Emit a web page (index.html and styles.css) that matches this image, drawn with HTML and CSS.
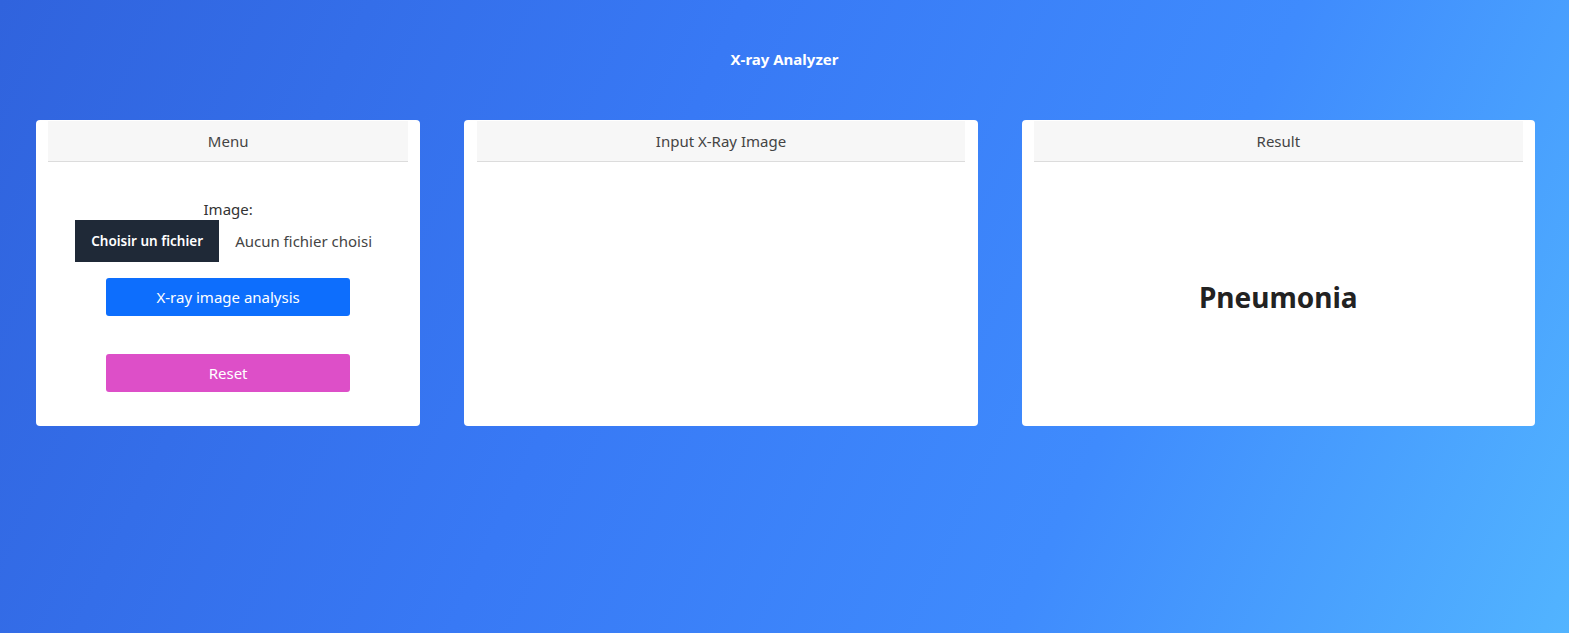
FILE: index.html
```html
<!DOCTYPE html>
<html lang="fr">
<head>
<meta charset="utf-8">
<title>X-ray Analyzer</title>
<link rel="stylesheet" href="styles.css">
</head>
<body>
  <header class="topbar">
    <h1 class="title">X-ray Analyzer</h1>
  </header>
  <main class="cards">
    <section class="card card-menu">
      <div class="card-header">Menu</div>
      <div class="card-body menu-body">
        <label class="field-label">Image:</label>
        <div class="file-input">
          <span class="file-btn">Choisir un fichier</span>
          <span class="file-name">Aucun fichier choisi</span>
        </div>
        <button class="btn btn-primary">X-ray image analysis</button>
        <button class="btn btn-reset">Reset</button>
      </div>
    </section>
    <section class="card card-input">
      <div class="card-header">Input X-Ray Image</div>
      <div class="card-body"></div>
    </section>
    <section class="card card-result">
      <div class="card-header">Result</div>
      <div class="card-body result-body">
        <div class="result-text">Pneumonia</div>
      </div>
    </section>
  </main>
</body>
</html>
```

FILE: styles.css
```css
html, body {
  margin: 0;
  height: 100%;
}
body {
  font-family: "Noto Sans", "Open Sans", sans-serif;
  background: linear-gradient(115deg, #3063dd 0%, #3879f5 40%, #3f8bfd 70%, #52b4ff 100%);
  min-height: 633px;
  color: #212529;
}
.topbar {
  padding-top: 48px;
  height: 72px;
  box-sizing: border-box;
  display: flex;
  justify-content: center;
}
.title {
  margin: 0;
  font-size: 15px;
  font-weight: 700;
  color: #fff;
  line-height: 22px;
}
.cards {
  display: grid;
  grid-template-columns: 384fr 513fr 513fr;
  column-gap: 44px;
  padding: 48px 34px 0 36px;
}
.card {
  background: #fff;
  border-radius: 4px;
  height: 306px;
  display: flex;
  flex-direction: column;
  padding: 1px 12px 0;
  box-sizing: border-box;
  min-width: 0;
}
.card-input { padding: 1px 13px 0; }
.card-header {
  background: #f7f7f7;
  border-bottom: 1px solid #dcdcdc;
  height: 40px;
  display: flex;
  align-items: center;
  justify-content: center;
  font-size: 15px;
  color: #444;
}
.card-body {
  flex: 1;
}
.menu-body {
  display: flex;
  flex-direction: column;
  align-items: center;
  padding-top: 37px;
}
.field-label {
  font-size: 15px;
  color: #333;
  line-height: 20px;
}
.file-input {
  display: flex;
  align-items: center;
  margin-top: 1px;
  width: 306px;
}
.file-btn {
  background: #1f2937;
  color: #fff;
  font-size: 13.5px;
  font-weight: 600;
  height: 42px;
  width: 144px;
  display: flex;
  align-items: center;
  justify-content: center;
}
.file-name {
  margin-left: 16px;
  font-size: 15px;
  color: #444;
  white-space: nowrap;
}
.btn {
  border: none;
  border-radius: 3px;
  width: 244px;
  height: 38px;
  color: #fff;
  font-family: inherit;
  font-size: 15px;
}
.btn-primary {
  background: #0d6efd;
  margin-top: 16px;
}
.btn-reset {
  background: #dd4fc8;
  margin-top: 38px;
}
.result-body {
  display: flex;
  align-items: center;
  justify-content: center;
  padding-top: 6px;
}
.result-text {
  font-size: 28px;
  font-weight: 700;
  color: #222;
}
```
